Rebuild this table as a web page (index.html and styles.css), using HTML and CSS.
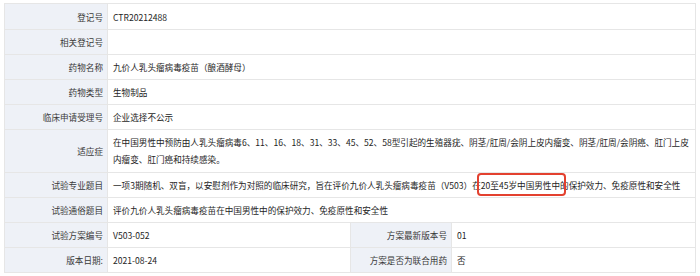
FILE: index.html
```html
<!DOCTYPE html>
<html lang="zh">
<head>
<meta charset="utf-8">
<link rel="stylesheet" href="styles.css">
</head>
<body>
<div class="page">
  <div class="grid">
    <div class="lab">登记号</div><div class="val span3">CTR20212488</div>
    <div class="lab">相关登记号</div><div class="val span3"></div>
    <div class="lab">药物名称</div><div class="val span3">九价人乳头瘤病毒疫苗（酿酒酵母）</div>
    <div class="lab">药物类型</div><div class="val span3">生物制品</div>
    <div class="lab">临床申请受理号</div><div class="val span3">企业选择不公示</div>
    <div class="lab">适应症</div><div class="val span3 wrap">在中国男性中预防由人乳头瘤病毒6、11、16、18、31、33、45、52、58型引起的生殖器疣、阴茎/肛周/会阴上皮内瘤变、阴茎/肛周/会阴癌、肛门上皮内瘤变、肛门癌和持续感染。</div>
    <div class="lab">试验专业题目</div><div class="val span3">一项3期随机、双盲，以安慰剂作为对照的临床研究，旨在评价九价人乳头瘤病毒疫苗（V503）在<span class="mark">20至45岁中国男性中</span>的保护效力、免疫原性和安全性</div>
    <div class="lab">试验通俗题目</div><div class="val span3">评价九价人乳头瘤病毒疫苗在中国男性中的保护效力、免疫原性和安全性</div>
    <div class="lab">试验方案编号</div><div class="val">V503-052</div><div class="lab">方案最新版本号</div><div class="val">01</div>
    <div class="lab">版本日期:</div><div class="val">2021-08-24</div><div class="lab">方案是否为联合用药</div><div class="val">否</div>
  </div>
</div>
</body>
</html>
```
FILE: styles.css
```css
html, body {
  margin: 0;
  padding: 0;
  background: #ffffff;
}
.page {
  padding: 3px 4px 0 4px;
  font-family: "Noto Sans CJK SC", "Liberation Sans", sans-serif;
  font-size: 8.6px;
}
.grid {
  display: grid;
  grid-template-columns: 102px 242px 100px 1fr;
  grid-template-rows: 25px 24px 24px 24px 24px 42px 24px 24px 24px 24px;
  gap: 1px;
  padding: 1px;
  background: #e6e6e6;
}
.lab {
  background: #eef1f7;
  color: #3a3a3a;
  padding-right: 4px;
  display: flex;
  align-items: center;
  justify-content: flex-end;
  white-space: nowrap;
}
.val {
  background: #fff;
  color: #1e1e1e;
  padding-left: 5px;
  padding-right: 4px;
  display: flex;
  align-items: center;
  white-space: nowrap;
}
.span3 {
  grid-column: span 3;
}
.val.wrap {
  white-space: normal;
  line-height: 17px;
}
.mark {
  position: relative;
}
.mark::after {
  content: "";
  position: absolute;
  left: -4px;
  right: -6px;
  top: -6px;
  bottom: -5px;
  border: 2px solid #e3412f;
  border-radius: 4px;
}
```
